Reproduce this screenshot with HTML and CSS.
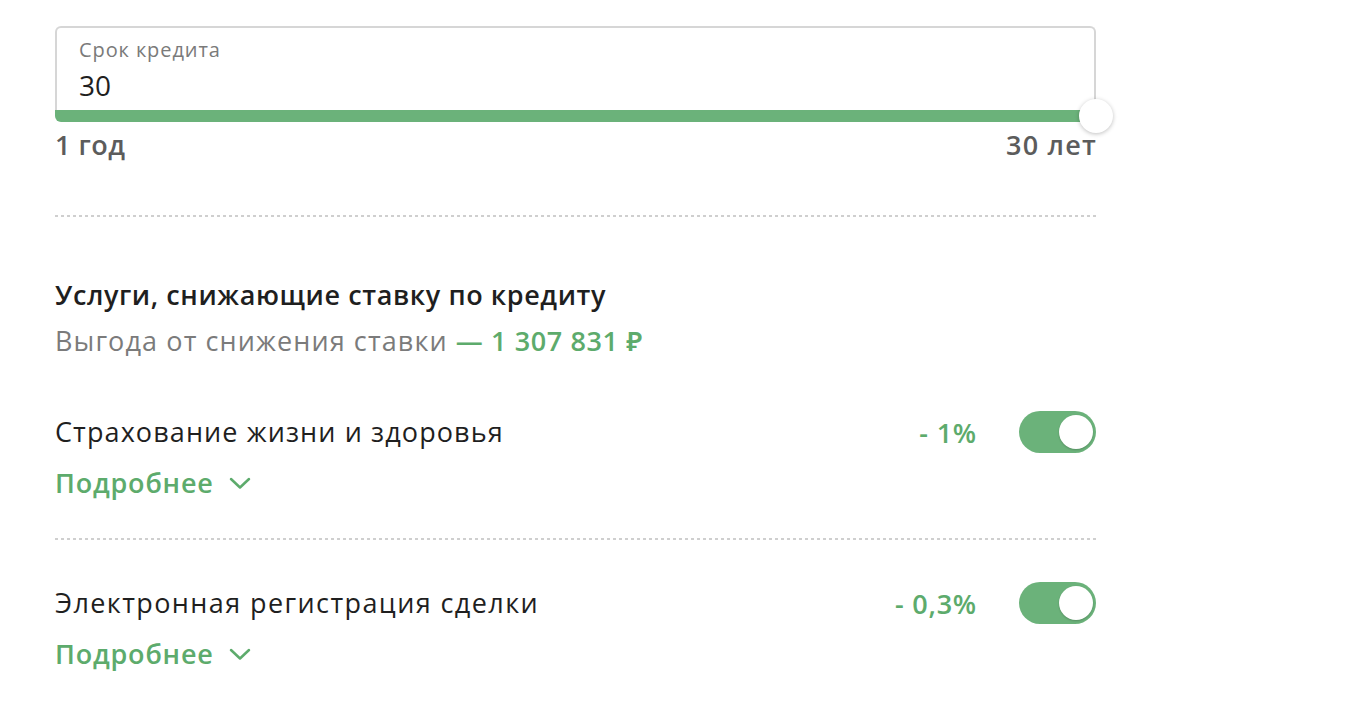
FILE: index.html
```html
<!DOCTYPE html>
<html lang="ru">
<head>
    <meta charset="UTF-8">
    <meta name="viewport" content="width=device-width, initial-scale=1.0">
    <title>Ипотечный калькулятор</title>
    <link rel="stylesheet" href="styles.css">
</head>
<body>
    <div class="calc">

        <div class="term">
            <div class="term-field">
                <div class="term-label">Срок кредита</div>
                <div class="term-value">30</div>
            </div>
            <div class="term-track">
                <span class="term-thumb"></span>
            </div>
            <div class="term-limits">
                <span>1 год</span>
                <span>30 лет</span>
            </div>
        </div>

        <div class="divider divider-top"></div>

        <div class="services-head">
            <div class="services-title">Услуги, снижающие ставку по кредиту</div>
            <div class="services-sub">Выгода от снижения ставки <span class="green">— 1 307 831 ₽</span></div>
        </div>

        <div class="service">
            <div class="service-row">
                <div class="service-name">Страхование жизни и здоровья</div>
                <div class="service-ctrl">
                    <span class="service-rate">- 1%</span>
                    <span class="toggle"><span class="toggle-knob"></span></span>
                </div>
            </div>
            <a class="more" href="#">Подробнее
                <svg width="22" height="13" viewBox="0 0 22 13"><polyline points="2,2 11,10.5 20,2" fill="none" stroke="#5dab6c" stroke-width="2.5" stroke-linecap="round" stroke-linejoin="round"/></svg>
            </a>
        </div>

        <div class="divider"></div>

        <div class="service">
            <div class="service-row">
                <div class="service-name name-wide">Электронная регистрация сделки</div>
                <div class="service-ctrl">
                    <span class="service-rate">- 0,3%</span>
                    <span class="toggle"><span class="toggle-knob"></span></span>
                </div>
            </div>
            <a class="more" href="#">Подробнее
                <svg width="22" height="13" viewBox="0 0 22 13"><polyline points="2,2 11,10.5 20,2" fill="none" stroke="#5dab6c" stroke-width="2.5" stroke-linecap="round" stroke-linejoin="round"/></svg>
            </a>
        </div>

    </div>
</body>
</html>
```

FILE: styles.css
```css
body {
    margin: 0;
    background: #ffffff;
    font-family: "Open Sans", "Noto Sans", sans-serif;
    color: #1f1f1f;
}
.calc {
    width: 1041px;
    padding: 26px 0 0 55px;
}
.green {
    color: #5dab6c;
    font-weight: 600;
    letter-spacing: 0.6px;
}

/* slider field */
.term-field {
    border: 2px solid #d6d6d6;
    border-bottom: none;
    border-radius: 6px 6px 0 0;
    padding: 10px 22px 8px;
}
.term-label {
    font-size: 20px;
    line-height: 24px;
    letter-spacing: 0.9px;
    color: #7a7a7a;
}
.term-value {
    margin-top: 6px;
    font-size: 28px;
    line-height: 34px;
    color: #1f1f1f;
}
.term-track {
    position: relative;
    height: 12px;
    background: #6bb27a;
    border-radius: 0 0 6px 6px;
}
.term-thumb {
    position: absolute;
    right: -17px;
    top: -11px;
    width: 34px;
    height: 34px;
    border-radius: 50%;
    background: #ffffff;
    box-shadow: 0 1px 4px rgba(0, 0, 0, 0.25);
}
.term-limits {
    display: flex;
    justify-content: space-between;
    margin-top: 7px;
    font-size: 27px;
    line-height: 32px;
    font-weight: 600;
    letter-spacing: 0.5px;
    color: #5c5c5c;
}
.term-limits span:last-child {
    letter-spacing: 1.2px;
    margin-right: -1px;
}

/* dotted separator */
.divider {
    height: 2px;
    background: repeating-linear-gradient(90deg, #cfcfcf 0 3px, transparent 3px 6px);
}
.divider-top {
    margin-top: 54px;
}

.services-head {
    margin-top: 62px;
    margin-bottom: 12px;
}
.services-title {
    font-size: 27px;
    line-height: 32px;
    font-weight: 600;
    letter-spacing: 0.6px;
}
.services-sub {
    margin-top: 14px;
    font-size: 27px;
    line-height: 32px;
    letter-spacing: 1.1px;
    color: #7b7b7b;
}

/* service item */
.service {
    padding: 42px 0 39px;
}
.service-row {
    display: flex;
    justify-content: space-between;
    align-items: center;
    height: 42px;
}
.service-name {
    font-size: 27px;
    line-height: 32px;
    font-weight: 500;
    letter-spacing: 1.1px;
}
.name-wide {
    letter-spacing: 1.4px;
}
.service-ctrl {
    display: flex;
    align-items: center;
    gap: 42px;
}
.service-rate {
    font-size: 27px;
    font-weight: 600;
    letter-spacing: 0.8px;
    color: #5dab6c;
}
.toggle {
    position: relative;
    display: block;
    width: 77px;
    height: 42px;
    border-radius: 21px;
    background: #6bb27a;
}
.toggle-knob {
    position: absolute;
    right: 3px;
    top: 4px;
    width: 34px;
    height: 34px;
    border-radius: 50%;
    background: #ffffff;
    box-shadow: 0 1px 2px rgba(0, 0, 0, 0.2);
}
.more {
    display: flex;
    align-items: center;
    gap: 15px;
    margin-top: 14px;
    font-size: 27px;
    line-height: 32px;
    font-weight: 600;
    letter-spacing: 0.8px;
    color: #5dab6c;
    text-decoration: none;
}
```
